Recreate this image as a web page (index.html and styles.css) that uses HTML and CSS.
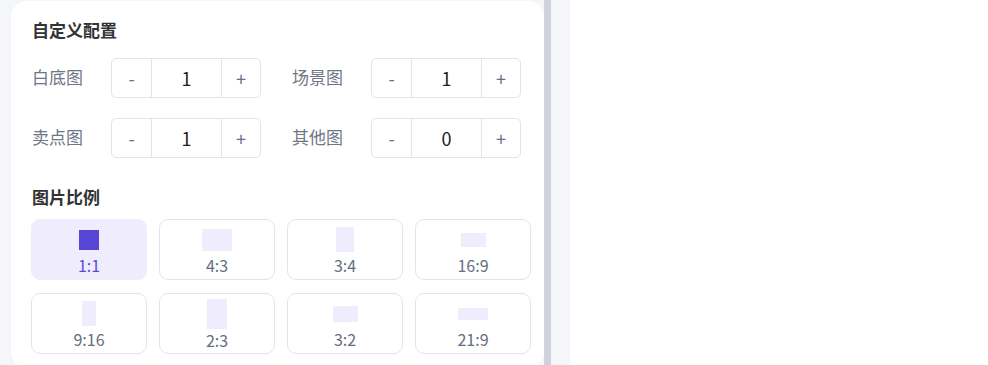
FILE: index.html
```html
<!DOCTYPE html>
<html lang="zh">
<head>
<meta charset="utf-8">
<link rel="stylesheet" href="styles.css">
</head>
<body>
<div class="app">
  <aside class="panel">
    <div class="scroll">
      <section class="card">
        <h2 class="title">自定义配置</h2>
        <div class="counts">
          <div class="count"><span class="label">白底图</span><div class="stepper"><button class="btn">-</button><span class="val">1</span><button class="btn">+</button></div></div>
          <div class="count"><span class="label">场景图</span><div class="stepper"><button class="btn">-</button><span class="val">1</span><button class="btn">+</button></div></div>
          <div class="count"><span class="label">卖点图</span><div class="stepper"><button class="btn">-</button><span class="val">1</span><button class="btn">+</button></div></div>
          <div class="count"><span class="label">其他图</span><div class="stepper"><button class="btn">-</button><span class="val">0</span><button class="btn">+</button></div></div>
        </div>
        <h2 class="title title-2">图片比例</h2>
        <div class="ratios">
          <div class="ratio active"><div class="shape-box"><i class="shape" style="width:20px;height:20px"></i></div><span class="rlabel">1:1</span></div>
          <div class="ratio"><div class="shape-box"><i class="shape" style="width:30px;height:22px"></i></div><span class="rlabel">4:3</span></div>
          <div class="ratio"><div class="shape-box"><i class="shape" style="width:18px;height:25px"></i></div><span class="rlabel">3:4</span></div>
          <div class="ratio"><div class="shape-box"><i class="shape" style="width:25px;height:14px"></i></div><span class="rlabel">16:9</span></div>
          <div class="ratio"><div class="shape-box"><i class="shape" style="width:14px;height:25px"></i></div><span class="rlabel">9:16</span></div>
          <div class="ratio"><div class="shape-box"><i class="shape" style="width:20px;height:30px"></i></div><span class="rlabel">2:3</span></div>
          <div class="ratio"><div class="shape-box"><i class="shape" style="width:25px;height:16px"></i></div><span class="rlabel">3:2</span></div>
          <div class="ratio"><div class="shape-box"><i class="shape" style="width:30px;height:12px"></i></div><span class="rlabel">21:9</span></div>
        </div>
      </section>
    </div>
    <div class="scrollbar"></div>
  </aside>
  <main class="main"></main>
</div>
</body>
</html>
```
FILE: styles.css
```css
* { box-sizing: border-box; }
html, body { margin: 0; padding: 0; height: 365px; overflow: hidden; }
body { font-family: "Noto Sans CJK SC", "Noto Sans", sans-serif; background: #fff; }
.app { display: flex; height: 365px; }
.panel { width: 570px; flex: none; background: #f5f6fa; display: flex; padding-right: 19px; }
.scroll { flex: 1; padding: 1px 0 0 11px; overflow: hidden; }
.scrollbar { width: 7px; background: #d1d3dc; flex: none; }
.main { flex: 1; background: #fff; }
.card { background: #fff; border-radius: 16px; padding: 17px 13px 14px 20px; }
.title { margin: 0 0 16px 1px; font-size: 17px; line-height: 24px; font-weight: 700; color: #333; }
.title-2 { margin-top: 27px; margin-bottom: 10px; }
.counts { display: grid; grid-template-columns: 230px 230px; column-gap: 30px; row-gap: 20px; }
.count { display: flex; align-items: center; }
.label { width: 80px; flex: none; padding-left: 1px; font-size: 17px; line-height: 24px; margin-top: -2px; color: #6f7686; }
.stepper { display: flex; width: 150px; height: 40px; border: 1px solid #e3e4ec; border-radius: 5px; }
.btn { width: 41px; flex: none; border: 0; background: transparent; font-family: inherit; font-size: 18px; color: #66708a; padding: 0; }
.btn:first-child { width: 40px; border-right: 1px solid #e3e4ec; }
.btn:last-child { width: 39px; border-left: 1px solid #e3e4ec; }
.val { flex: 1; display: flex; align-items: center; justify-content: center; font-size: 18px; color: #222; }
.ratios { display: grid; grid-template-columns: repeat(4, 116px); column-gap: 12px; row-gap: 13px; }
.ratio { height: 61px; border: 1px solid #e4e4ef; border-radius: 9px; padding: 5px 0 3px; display: flex; flex-direction: column; align-items: center; }
.shape-box { height: 30px; display: flex; align-items: center; justify-content: center; }
.shape { display: block; background: #efedfd; }
.rlabel { margin-top: 1px; font-size: 16px; line-height: 21px; color: #656d80; }
.ratio.active { background: #efecfe; border-color: #efecfe; }
.ratio.active .shape { background: #5846d6; }
.ratio.active .rlabel { color: #5a48da; }
```
